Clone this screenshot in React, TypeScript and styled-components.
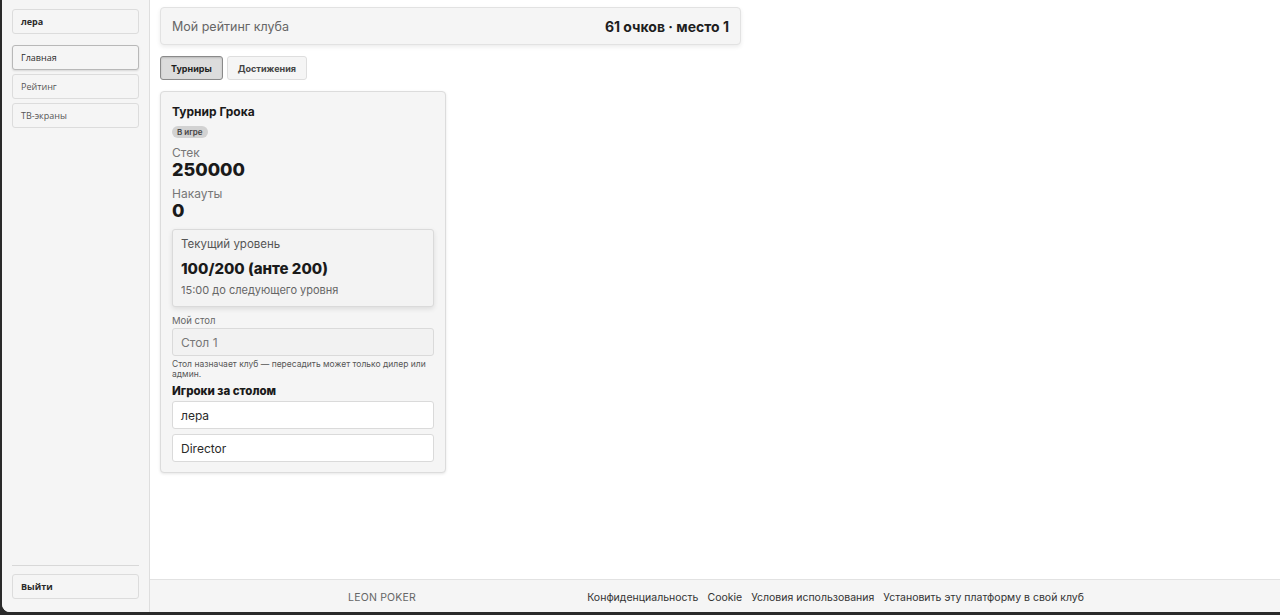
import React from "react";
import styled, { createGlobalStyle } from "styled-components";

const GlobalStyle = createGlobalStyle`
  html, body {
    margin: 0;
    padding: 0;
    background: #2a2a2a;
  }
  * {
    box-sizing: border-box;
  }
`;

const Shell = styled.div`
  display: flex;
  height: 612px;
  margin-left: 2px;
  background: #fff;
  border-bottom-left-radius: 8px;
  overflow: hidden;
  font-family: Inter, "Noto Sans", sans-serif;
  color: #1a1a1a;
`;

const Sidebar = styled.aside`
  width: 148px;
  flex-shrink: 0;
  display: flex;
  flex-direction: column;
  padding: 9px 10px 9px 10px;
  background: #f5f5f5;
  border-right: 1px solid #dedede;
  font-family: "Open Sans", "DejaVu Sans", sans-serif;
`;

const SideButton = styled.div<{ $active?: boolean; $bold?: boolean }>`
  height: 25px;
  display: flex;
  align-items: center;
  padding: 0 8px;
  margin-bottom: 4px;
  font-size: 9px;
  font-weight: ${(p) => (p.$bold ? 700 : 400)};
  color: ${(p) => (p.$bold || p.$active ? "#2a2a2a" : "#555")};
  background: #f5f5f5;
  border: 1px solid ${(p) => (p.$active ? "#b8b8b8" : "#dcdcdc")};
  border-radius: 3px;
  box-shadow: ${(p) => (p.$active ? "0 1px 2px rgba(0,0,0,0.12)" : "none")};
`;

const SideGap = styled.div`
  height: 7px;
`;

const SideSpacer = styled.div`
  flex: 1;
`;

const SideRule = styled.hr`
  border: none;
  border-top: 1px solid #d8d8d8;
  margin: 0 0 8px 0;
`;

const Main = styled.div`
  flex: 1;
  display: flex;
  flex-direction: column;
  min-width: 0;
`;

const Content = styled.main`
  flex: 1;
  padding: 7px 10px;
`;

const RatingBar = styled.div`
  width: 581px;
  height: 38px;
  display: flex;
  align-items: center;
  justify-content: space-between;
  padding: 0 11px;
  background: #f5f5f5;
  border: 1px solid #e2e2e2;
  border-radius: 4px;
  box-shadow: 0 2px 4px rgba(0, 0, 0, 0.08);
`;

const RatingLabel = styled.span`
  font-size: 12.5px;
  color: #666;
`;

const RatingValue = styled.span`
  font-size: 14px;
  font-weight: 700;
  color: #1e1e1e;
`;

const Tabs = styled.div`
  display: flex;
  gap: 4px;
  margin-top: 11px;
`;

const Tab = styled.button<{ $active?: boolean }>`
  height: 24px;
  padding: 0 10px;
  font-family: inherit;
  font-size: 9px;
  font-weight: 700;
  color: ${(p) => (p.$active ? "#1e1e1e" : "#444")};
  background: ${(p) => (p.$active ? "#dcdcdc" : "#f5f5f5")};
  border: 1px solid ${(p) => (p.$active ? "#8a8a8a" : "#dedede")};
  border-radius: 3px;
  box-shadow: ${(p) => (p.$active ? "inset 0 1px 2px rgba(0,0,0,0.15)" : "none")};
`;

const Card = styled.section`
  width: 286px;
  margin-top: 11px;
  padding: 12px 11px 10px 11px;
  background: #f5f5f5;
  border: 1px solid #dcdcdc;
  border-radius: 4px;
  box-shadow: 0 1px 3px rgba(0, 0, 0, 0.1);
`;

const CardTitle = styled.h3`
  margin: 0;
  font-size: 12px;
  font-weight: 700;
  color: #1a1a1a;
`;

const Badge = styled.span`
  display: inline-block;
  margin-top: 6px;
  padding: 0 5px;
  font-size: 8px;
  line-height: 12px;
  font-weight: 600;
  color: #444;
  background: #d2d2d2;
  border-radius: 7px;
`;

const StatLabel = styled.div`
  margin-top: 6px;
  font-size: 12px;
  color: #777;
`;

const StatValue = styled.div`
  font-size: 18px;
  font-weight: 800;
  line-height: 20px;
  color: #1a1a1a;
`;

const LevelBox = styled.div`
  margin-top: 8px;
  padding: 7px 8px 9px 8px;
  background: #f3f3f3;
  border: 1px solid #dadada;
  border-radius: 3px;
  box-shadow: 0 2px 5px rgba(0, 0, 0, 0.1);
`;

const LevelLabel = styled.div`
  font-size: 11.5px;
  color: #555;
`;

const LevelValue = styled.div`
  margin-top: 8px;
  font-size: 15px;
  font-weight: 800;
  color: #1a1a1a;
`;

const LevelHint = styled.div`
  margin-top: 5px;
  font-size: 11px;
  color: #666;
`;

const FieldLabel = styled.div`
  margin-top: 8px;
  font-size: 9.5px;
  color: #666;
`;

const Field = styled.div<{ $muted?: boolean }>`
  height: 28px;
  display: flex;
  align-items: center;
  padding: 0 8px;
  margin-top: ${(p) => (p.$muted ? "2px" : "5px")};
  font-size: 12px;
  color: ${(p) => (p.$muted ? "#777" : "#2a2a2a")};
  background: ${(p) => (p.$muted ? "#f2f2f2" : "#fff")};
  border: 1px solid #dadada;
  border-radius: 3px;
`;

const FieldNote = styled.p`
  margin: 3px 0 0 0;
  font-size: 8.5px;
  line-height: 10px;
  color: #555;
`;

const SubTitle = styled.h4`
  margin: 5px 0 -2px 0;
  font-size: 11.5px;
  font-weight: 800;
  color: #1a1a1a;
`;

const Footer = styled.footer`
  height: 33px;
  display: flex;
  align-items: center;
  justify-content: space-between;
  padding: 3px 196px 0 198px;
  background: #f5f5f5;
  border-top: 1px solid #e2e2e2;
  font-size: 10.5px;
  color: #333;
`;

const Brand = styled.span`
  color: #666;
  letter-spacing: 0.2px;
`;

const Links = styled.nav`
  display: flex;
  gap: 9px;
`;

const players = ["лера", "Director"];
const footerLinks = [
  "Конфиденциальность",
  "Cookie",
  "Условия использования",
  "Установить эту платформу в свой клуб",
];

export default function App() {
  return (
    <>
      <GlobalStyle />
      <Shell>
        <Sidebar>
          <SideButton $bold>лера</SideButton>
          <SideGap />
          <SideButton $active>Главная</SideButton>
          <SideButton>Рейтинг</SideButton>
          <SideButton>ТВ-экраны</SideButton>
          <SideSpacer />
          <SideRule />
          <SideButton $bold>Выйти</SideButton>
        </Sidebar>
        <Main>
          <Content>
            <RatingBar>
              <RatingLabel>Мой рейтинг клуба</RatingLabel>
              <RatingValue>61 очков · место 1</RatingValue>
            </RatingBar>
            <Tabs>
              <Tab $active>Турниры</Tab>
              <Tab>Достижения</Tab>
            </Tabs>
            <Card>
              <CardTitle>Турнир Грока</CardTitle>
              <Badge>В игре</Badge>
              <StatLabel>Стек</StatLabel>
              <StatValue>250000</StatValue>
              <StatLabel>Накауты</StatLabel>
              <StatValue>0</StatValue>
              <LevelBox>
                <LevelLabel>Текущий уровень</LevelLabel>
                <LevelValue>100/200 (анте 200)</LevelValue>
                <LevelHint>15:00 до следующего уровня</LevelHint>
              </LevelBox>
              <FieldLabel>Мой стол</FieldLabel>
              <Field $muted>Стол 1</Field>
              <FieldNote>
                Стол назначает клуб — пересадить может только дилер или админ.
              </FieldNote>
              <SubTitle>Игроки за столом</SubTitle>
              {players.map((name) => (
                <Field key={name}>{name}</Field>
              ))}
            </Card>
          </Content>
          <Footer>
            <Brand>LEON POKER</Brand>
            <Links>
              {footerLinks.map((l) => (
                <span key={l}>{l}</span>
              ))}
            </Links>
          </Footer>
        </Main>
      </Shell>
    </>
  );
}
